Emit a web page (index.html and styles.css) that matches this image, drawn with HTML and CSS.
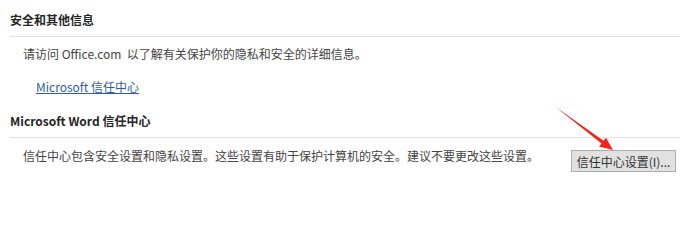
FILE: index.html
```html
<!DOCTYPE html>
<html lang="zh-CN">
<head>
  <meta charset="UTF-8">
  <meta name="viewport" content="width=device-width, initial-scale=1.0">
  <title>信任中心</title>
  <link rel="stylesheet" href="styles.css">
</head>
<body>
  <div class="section">
    <h2 class="section-title">安全和其他信息</h2>
    <p class="desc">请访问 Office.com &nbsp;以了解有关保护你的隐私和安全的详细信息。</p>
    <a class="link" href="#">Microsoft 信任中心</a>
  </div>

  <div class="section">
    <h2 class="section-title second">Microsoft Word 信任中心</h2>
    <div class="row">
      <p class="desc">信任中心包含安全设置和隐私设置。这些设置有助于保护计算机的安全。建议不要更改这些设置。</p>
      <button class="btn">信任中心设置(I)...</button>
    </div>
  </div>

  <svg class="arrow" width="680" height="241" viewBox="0 0 680 241">
    <polygon points="555,106.5 601.5,143.6 599,146.6 613,150 606,137.8 603.5,140.8" fill="#f5211d"/>
  </svg>
</body>
</html>
```

FILE: styles.css
```css
body {
  margin: 0px;
  position: relative;
  width: 680px;
  height: 241px;
  background-color: #ffffff;
  font-family: 'Noto Sans CJK SC', 'Noto Sans', sans-serif;
  font-size: 12px;
  color: #444444;
  overflow: hidden;
}

.section {
  padding-left: 10px;
}

.section-title {
  margin: 0px;
  margin-top: 12px;
  padding-bottom: 8px;
  font-size: 12px;
  line-height: 16px;
  font-weight: bold;
  color: #262626;
  border-bottom: 1px solid #e1e1e1;
}

.section-title.second {
  margin-top: 18px;
}

.desc {
  margin: 0px;
  margin-top: 9px;
  padding-left: 13px;
  line-height: 16px;
  white-space: nowrap;
}

.link {
  display: inline-block;
  margin-top: 17px;
  margin-left: 26px;
  line-height: 16px;
  color: #2e5ea6;
  text-decoration: underline;
}

.row {
  display: flex;
  align-items: flex-start;
  padding-right: 4px;
}

.row .desc {
  margin-top: 10px;
}

.btn {
  margin-left: auto;
  margin-top: 12px;
  height: 22px;
  width: 105px;
  padding: 0px;
  font-family: inherit;
  font-size: 12px;
  color: #333333;
  background-color: #e1e1e1;
  border: 1px solid #adadad;
  border-radius: 0px;
}

.arrow {
  position: absolute;
  top: 0px;
  left: 0px;
  pointer-events: none;
}
```
